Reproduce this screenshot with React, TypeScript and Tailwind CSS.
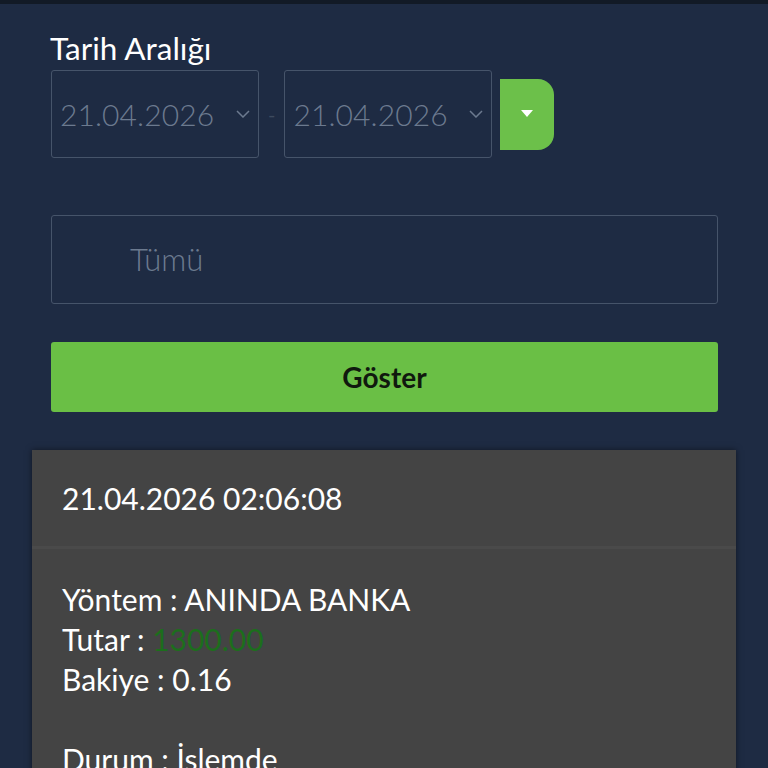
import React from "react";

const font = { fontFamily: "Lato, 'Noto Sans', sans-serif" };

function Chevron() {
  return (
    <svg width="14" height="8" viewBox="0 0 14 8" fill="none">
      <path d="M1 1l6 6 6-6" stroke="#6c7a8f" strokeWidth="1.5" />
    </svg>
  );
}

function DateBox() {
  return (
    <div className="flex h-[88px] w-[208px] items-center justify-between rounded-[3px] border border-[#46546a] pl-[8px] pr-[8px]">
      <span className="text-[30px] font-light tracking-[0.1px] text-[#6c7a8f]">21.04.2026</span>
      <Chevron />
    </div>
  );
}

export default function App() {
  return (
    <div className="min-h-[768px] w-[768px] overflow-hidden bg-[#1e2b43]" style={font}>
      <div className="h-[4px] bg-[#121a26]" />
      <div className="px-[51px] pt-[26px]">
        <div className="-ml-[1px] text-[31.5px] leading-[37px] text-white">Tarih Aralığı</div>
        <div className="mt-[3px] flex items-center">
          <DateBox />
          <span className="mx-[9px] text-[20px] text-[#3d4a5e]">-</span>
          <DateBox />
          <div className="ml-[8px] flex h-[71px] w-[54px] items-center justify-center rounded-r-[16px] bg-[#6cc04a]">
            <svg width="12" height="8" viewBox="0 0 12 8">
              <path d="M0 0h12L6 7z" fill="#fff" />
            </svg>
          </div>
        </div>
        <div className="mt-[57px] flex h-[89px] w-[667px] items-center rounded-[3px] border border-[#46546a] pl-[78px]">
          <span className="text-[31px] font-light text-[#6c7a8f]">Tümü</span>
        </div>
        <div className="mt-[38px] flex h-[70px] w-[667px] items-center justify-center rounded-[3px] bg-[#6abf45]">
          <span className="text-[28px] font-bold text-[#10190e]">Göster</span>
        </div>
      </div>
      <div className="mx-[32px] mt-[38px] h-[400px] bg-[#444444] shadow-[0_0_6px_rgba(0,0,0,0.5)]">
        <div className="h-[99px] border-b-[3px] border-[#4a4a4a] px-[30px] pt-[28px]">
          <span className="text-[30px] leading-[40px] text-white">21.04.2026 02:06:08</span>
        </div>
        <div className="px-[30px] pt-[30px] text-[30px] leading-[40px] text-white">
          <div>Yöntem : ANINDA BANKA</div>
          <div>
            Tutar : <span className="text-[#1c6e1c]">1300.00</span>
          </div>
          <div>Bakiye : 0.16</div>
          <div className="h-[40px]" />
          <div>Durum : İşlemde</div>
        </div>
      </div>
    </div>
  );
}
